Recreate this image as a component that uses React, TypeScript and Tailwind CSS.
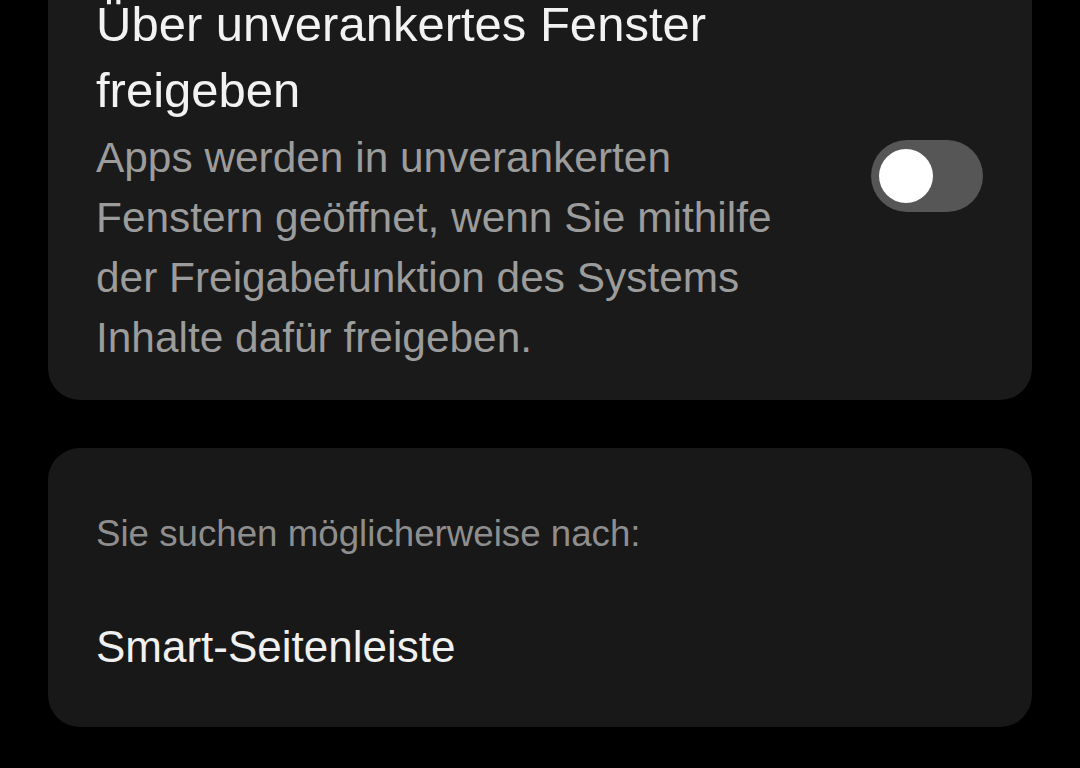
export default function App() {
  return (
    <div className="min-h-[768px] h-[768px] overflow-hidden bg-black px-[48px] font-['Liberation_Sans',Arial,sans-serif]">
      {/* freigabe card, top is cut off by the viewport */}
      <div className="mt-[-56px] flex items-start justify-between rounded-[32px] bg-[#1a1a1a] pl-[48px] pr-[49px] pt-[47px] pb-[32px]">
        <div className="w-[700px]">
          <h2 className="text-[49px] leading-[66px] text-[#f2f2f2]">
            Über unverankertes Fenster freigeben
          </h2>
          <p className="mt-[5px] text-[42.4px] leading-[60px] text-[#9c9c9c]">
            Apps werden in unverankerten Fenstern geöffnet, wenn Sie mithilfe der Freigabefunktion des Systems Inhalte dafür freigeben.
          </p>
        </div>
        <button className="mt-[149px] flex h-[72px] w-[112px] shrink-0 items-center rounded-full bg-[#565656] pl-[8px]">
          <span className="h-[54px] w-[54px] rounded-full bg-white" />
        </button>
      </div>

      <div className="mt-[48px] rounded-[32px] bg-[#181818] px-[48px] pt-[62px] pb-[52px]">
        <p className="text-[36.7px] leading-[48px] text-[#8e8e8e]">Sie suchen möglicherweise nach:</p>
        <p className="mt-[61px] text-[44px] leading-[56px] text-[#f0f0f0]">Smart-Seitenleiste</p>
      </div>
    </div>
  );
}
